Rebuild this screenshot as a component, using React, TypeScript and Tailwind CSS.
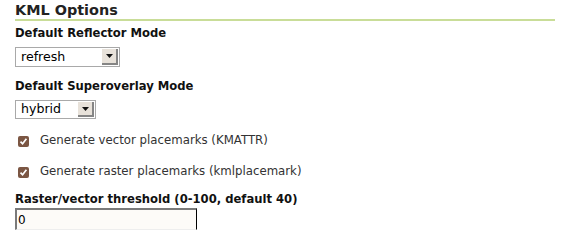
import { useState } from "react";

function FakeSelect({ value, width, height }: { value: string; width: string; height: string }) {
  return (
    <div className={`flex items-stretch border border-[#a9a9a9] bg-white ${width} ${height}`}>
      <span className="flex flex-1 items-center pl-[5px] text-[12.6px] leading-none text-black">{value}</span>
      <span className="m-px flex w-[16px] items-center justify-center border-r-2 border-b-2 border-r-[#858585] border-b-[#858585] bg-[#e8e2da]">
        <svg width="7" height="4" viewBox="0 0 7 4">
          <path d="M0 0h7L3.5 4z" fill="#111" />
        </svg>
      </span>
    </div>
  );
}

function Check({ label }: { label: string }) {
  const [checked, setChecked] = useState(true);
  return (
    <label
      className="flex h-[16px] items-center gap-[11px] pl-[3px] text-[11.75px] text-[#333]"
      onClick={() => setChecked(!checked)}
    >
      <span className="flex h-[11px] w-[11px] items-center justify-center rounded-[2px] bg-[#7b5643]">
        {checked ? (
          <svg width="9" height="9" viewBox="0 0 9 9">
            <path d="M1.5 4.6 3.6 6.8 7.4 1.8" stroke="#fff" strokeWidth="1.7" fill="none" />
          </svg>
        ) : null}
      </span>
      {label}
    </label>
  );
}

export default function App() {
  return (
    <div className="h-[237px] w-[566px] overflow-hidden bg-white pl-[15px] pr-[11px] font-['DejaVu_Sans',sans-serif]">
      <h2 className="border-b-2 border-[#c9dd98] pt-px text-[14.4px] leading-[18px] font-bold text-[#222]">KML Options</h2>
      <p className="mt-[5px] text-[11.6px] leading-[14px] font-bold text-[#111]">Default Reflector Mode</p>
      <div className="mt-[7px]">
        <FakeSelect value="refresh" width="w-[105px]" height="h-[20px]" />
      </div>
      <p className="mt-[12px] text-[11.6px] leading-[14px] font-bold text-[#111]">Default Superoverlay Mode</p>
      <div className="mt-[7px]">
        <FakeSelect value="hybrid" width="w-[81px]" height="h-[19px]" />
      </div>
      <div className="mt-[14px]">
        <Check label="Generate vector placemarks (KMATTR)" />
      </div>
      <div className="mt-[15px]">
        <Check label="Generate raster placemarks (kmlplacemark)" />
      </div>
      <p className="mt-[12px] text-[11.6px] leading-[14px] font-bold text-[#111]">Raster/vector threshold (0-100, default 40)</p>
      <input
        defaultValue="0"
        className="mt-[2px] block h-[22px] w-[182px] border-t-2 border-l-2 border-r border-b border-t-[#7a7a7a] border-l-[#7a7a7a] border-r-black border-b-[#eee] bg-[#fdfbf8] pl-px text-[12px] text-black outline-none"
      />
    </div>
  );
}
